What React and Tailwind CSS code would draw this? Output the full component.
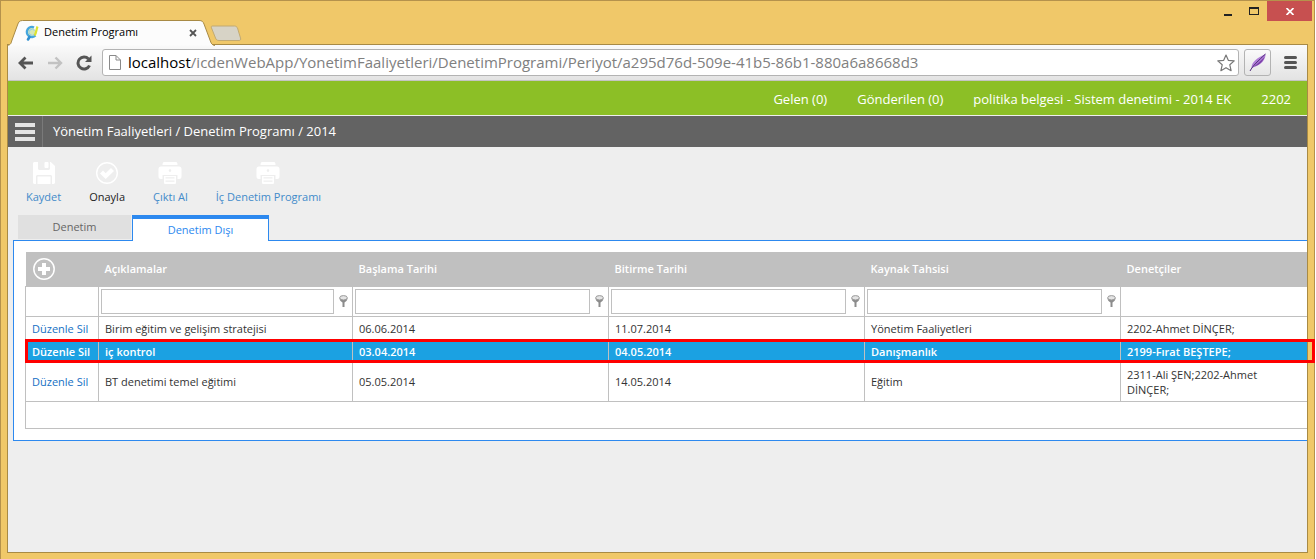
import React, { useState } from 'react';

const initialRows = [
  { id: 1, desc: 'Birim eğitim ve gelişim stratejisi', start: '06.06.2014', end: '11.07.2014', resource: 'Yönetim Faaliyetleri', auditors: '2202-Ahmet DİNÇER;' },
  { id: 2, desc: 'iç kontrol', start: '03.04.2014', end: '04.05.2014', resource: 'Danışmanlık', auditors: '2199-Fırat BEŞTEPE;' },
  { id: 3, desc: 'BT denetimi temel eğitimi', start: '05.05.2014', end: '14.05.2014', resource: 'Eğitim', auditors: '2311-Ali ŞEN;2202-Ahmet DİNÇER;' },
];

const filterColumns = ['Açıklamalar', 'Başlama Tarihi', 'Bitirme Tarihi', 'Kaynak Tahsisi'];

const SaveIcon = () => (
  <svg width="22" height="22" viewBox="0 0 22 22" fill="#fff">
    <path d="M1.5 0H5v6.500C5 7.300 5.700 8 6.500 8h9c.8 0 1.500-.7 1.500-1.500V0h.8L22 4v16.500c0 .8-.7 1.500-1.500 1.500H19v-7.500c0-.8-.7-1.500-1.500-1.500h-13c-.8 0-1.500.7-1.500 1.500V22H1.500C.7 22 0 21.300 0 20.500v-19C0 .7.700 0 1.500 0z" />
    <rect x="11.500" y="0" width="4" height="6" rx="1" />
    <rect x="4.500" y="14.500" width="13" height="7.500" />
  </svg>
);

const ApproveIcon = () => (
  <svg width="22" height="22" viewBox="0 0 22 22" fill="none">
    <circle cx="11" cy="11" r="10.300" stroke="#fff" strokeWidth="1.400" />
    <path d="M4 11.500L7 8.500l2.700 2.700L15 5.900l3 3-8.300 8.200z" fill="#fff" />
  </svg>
);

const PrintIcon = () => (
  <svg width="24" height="22" viewBox="0 0 24 22" fill="#fff">
    <path d="M6 0h12c1 0 1.500 1 1.500 3h-15C4.500 1 5 0 6 0z" />
    <path fillRule="evenodd" d="M3 4.500h18a2.500 2.500 0 0 1 2.500 2.500v7.500a2.500 2.500 0 0 1-2.500 2.500h-1.500v-4h-15v4H3A2.500 2.500 0 0 1 .5 14.500V7A2.500 2.500 0 0 1 3 4.500zM12 7.300a1.300 1.300 0 1 0 0 2.600 1.300 1.300 0 0 0 0-2.600z" />
    <path fillRule="evenodd" d="M6 14h12v6.500c0 1-.5 1.500-1.500 1.500h-9C6.500 22 6 21.500 6 20.500zM7.500 15.200v1.200h9v-1.200zM7.500 18.500v1.200h9v-1.200z" />
  </svg>
);

const FilterIcon = () => (
  <svg width="9" height="12" viewBox="0 0 9 12">
    <path d="M.5 3c0 2.500 1.800 3.800 3 4.500V12h2V7.500C6.700 6.800 8.500 5.500 8.500 3z" fill="#8c8c8c" />
    <ellipse cx="4.500" cy="2.800" rx="3.800" ry="2.200" fill="#e4e4e4" stroke="#999" />
  </svg>
);

const toolbarItems = [
  { label: 'Kaydet', Icon: SaveIcon, color: 'text-[#428bca]' },
  { label: 'Onayla', Icon: ApproveIcon, color: 'text-[#222]' },
  { label: 'Çıktı Al', Icon: PrintIcon, color: 'text-[#428bca]' },
  { label: 'İç Denetim Programı', Icon: PrintIcon, color: 'text-[#428bca]' },
];

const TitleBar = () => (
  <div className="flex h-11 items-start justify-between">
    <div className="relative mt-[19px] flex h-[25px]">
      <svg className="absolute left-0 top-0" width="236" height="26" viewBox="0 0 236 26">
        <path d="M0 25.500C4 25 4 23 5 20L10.500 5C11.500 2 12.500 .5 15.500 .5H192c3 0 4 1 5 3.500l6 16c1 3 2 5.500 5 5.500" fill="#fcfcfc" stroke="#a88a45" />
        <path d="M205 6h22.500c1.500 0 2.500 1 3 2l3 10c.5 1.500 0 2.500-1.500 2.500h-20c-2 0-3-1-3.500-2.500l-4-10c-.5-1.200 0-2 .5-2z" fill="#d7d3c6" stroke="#c2aa72" />
      </svg>
      <div className="relative flex w-[191px] items-center pl-[18px]">
        <svg width="14" height="16" viewBox="0 0 14 16" fill="none">
          <circle cx="6.500" cy="7" r="4.300" fill="#d6e8b4" />
          <path d="M9 2.500A5 5 0 1 0 10.500 10.500" stroke="#45a6de" strokeWidth="2.400" />
          <path d="M9.500 5.500A3 3 0 1 0 9.500 9" stroke="#8fcdf0" strokeWidth="1" />
          <path d="M4.500 12L3 14.500" stroke="#2f8fd0" strokeWidth="2.600" strokeLinecap="round" />
          <path d="M9.500 10.500C11.500 8.500 11 5 12.500 1.500" stroke="#dde32e" strokeWidth="2.200" />
        </svg>
        <span className="ml-[5px] flex-1 text-[11px] text-black">Denetim Programı</span>
        <button aria-label="Sekmeyi kapat" className="p-px">
          <svg width="8" height="8" viewBox="0 0 8 8" stroke="#555" strokeWidth="1.800"><path d="M1 1l6 6M7 1L1 7" /></svg>
        </button>
      </div>
    </div>
    <div className="-mr-1 flex h-5">
      <button aria-label="Küçült" className="flex w-[26px] items-end justify-center pb-[5px]"><span className="h-[2px] w-2 bg-[#222]" /></button>
      <button aria-label="Büyüt" className="flex w-[26px] items-center justify-center"><span className="h-2 w-[10px] border border-t-2 border-[#222]" /></button>
      <button aria-label="Kapat" className="flex w-[45px] items-center justify-center bg-[#c75050]">
        <svg width="8" height="7" viewBox="0 0 8 7" stroke="#fff" strokeWidth="1.700"><path d="M.5 0l7 7M7.500 0l-7 7" /></svg>
      </button>
    </div>
  </div>
);

const AddressBar = () => (
  <div className="flex h-9 items-center border-b border-[#c4c4c4] bg-linear-to-b from-[#fafafa] to-[#e3e3e3] pl-[10px] pr-2">
    <button aria-label="Geri" className="mr-[13px]">
      <svg width="16" height="14" viewBox="0 0 16 14" fill="none" stroke="#555" strokeWidth="2.800"><path d="M15 7H3M7.500 1.500L2 7l5.500 5.500" /></svg>
    </button>
    <button aria-label="İleri" className="mr-[13px]">
      <svg width="16" height="14" viewBox="0 0 16 14" fill="none" stroke="#c2c2c2" strokeWidth="2.400"><path d="M1 7h12M8.500 1.500L14 7l-5.500 5.500" /></svg>
    </button>
    <button aria-label="Yenile" className="mr-[10px]">
      <svg width="16" height="16" viewBox="0 0 16 16" fill="none"><path d="M12.500 4A6 6 0 1 0 13.500 10.500" stroke="#555" strokeWidth="3" /><path d="M15.500 .5V7H9z" fill="#555" /></svg>
    </button>
    <div className="flex h-[27px] flex-1 items-center rounded-[3px] border border-[#b3b3b3] bg-white px-[3px]">
      <svg className="ml-[3px]" width="12" height="15" viewBox="0 0 12 15" fill="#fff" stroke="#8a8a8a"><path d="M.5.5H7L11.500 5v9.500H.5zM7 .5V5h4.500" /></svg>
      <span className="ml-[7px] flex-1 text-[15px] text-[#808080]">
        <span className="text-black">localhost</span>/icdenWebApp/YonetimFaaliyetleri/DenetimProgrami/Periyot/a295d76d-509e-41b5-86b1-880a6a8668d3
      </span>
      <button aria-label="Yer işareti ekle">
        <svg width="18" height="18" viewBox="0 0 18 18" fill="none" stroke="#777" strokeWidth="1.200" strokeLinejoin="round"><path d="M9 1l2.300 5.300 5.900.6-4.400 3.900 1.300 5.900L9 13.700l-5.100 3 1.300-5.900L.8 6.900l5.900-.6z" /></svg>
      </button>
    </div>
    <button aria-label="Eklenti" className="ml-[5px] flex h-[27px] w-[27px] items-center justify-center rounded-[3px] border border-[#b3b3b3] bg-linear-to-b from-[#fafafa] to-[#e6e6e6]">
      <svg width="18" height="19" viewBox="0 0 18 19">
        <path d="M2.500 15C2.500 9 8 5 16.500 1c.3 5.500-4 11-14 14z" fill="#b07fd6" />
        <path d="M5 13.500c5-1 9-5 10.500-9.500C12 8 8 11 5 13.500z" fill="#7a3fa8" />
        <path d="M1 18C4 12.500 9 8 16.500 1" stroke="#4d2a78" fill="none" />
      </svg>
    </button>
    <button aria-label="Menü" className="ml-[13px] mr-[2px] flex w-[13px] flex-col gap-[2px]">
      <span className="h-[3px] rounded-sm bg-[#555]" />
      <span className="h-[3px] rounded-sm bg-[#555]" />
      <span className="h-[3px] rounded-sm bg-[#555]" />
    </button>
  </div>
);

const ProgramTable = ({ selectedId, onSelect }) => (
  <table className="w-full table-fixed border-collapse text-[11px] leading-[15px] text-[#333]">
    <colgroup>
      <col className="w-[73px]" />
      <col className="w-[254px]" />
      <col className="w-64" />
      <col className="w-64" />
      <col className="w-64" />
      <col />
    </colgroup>
    <thead>
      <tr className="h-[34px] bg-[#c0c0c0] text-left text-white">
        <th className="pl-[7px]">
          <button aria-label="Ekle" className="block">
            <svg width="22" height="22" viewBox="0 0 22 22" fill="none" stroke="#fff">
              <circle cx="11" cy="11" r="10.200" strokeWidth="1.500" />
              <path d="M11 5v12M5 11h12" strokeWidth="4" />
            </svg>
          </button>
        </th>
        {filterColumns.map(c => <th key={c} className="pl-[6px] font-semibold">{c}</th>)}
        <th className="pl-[6px] font-semibold">Denetçiler</th>
      </tr>
      <tr className="h-[30px]">
        <td className="border border-[#c0c0c0]" />
        {filterColumns.map(c => (
          <td key={c} className="border border-[#c0c0c0] p-0">
            <div className="flex items-center pl-[2px] pr-1">
              <input aria-label={c} className="h-[25px] min-w-0 flex-1 border border-[#c0c0c0] bg-white px-1 outline-none" />
              <button aria-label={`${c} filtrele`} className="ml-[5px]"><FilterIcon /></button>
            </div>
          </td>
        ))}
        <td className="border-y border-[#c0c0c0]" />
      </tr>
    </thead>
    <tbody>
      {initialRows.map(row => {
        const selected = row.id === selectedId;
        const cell = 'border-x border-[#c0c0c0] px-[6px] py-1';
        return (
          <tr
            key={row.id}
            onClick={() => onSelect(row.id)}
            className={selected ? 'relative bg-[#1ba1e2] font-semibold text-white' : ''}
          >
            <td className={cell}>
              <div className={selected ? 'whitespace-nowrap' : 'whitespace-nowrap text-[#1570c4]'}>
                <a href="#duzenle">Düzenle</a> <a href="#sil">Sil</a>
              </div>
              {selected && <span className="pointer-events-none absolute -top-px bottom-0 -left-px -right-2 border-[3px] border-[#f00]" />}
            </td>
            <td className={cell}>{row.desc}</td>
            <td className={cell}>{row.start}</td>
            <td className={cell}>{row.end}</td>
            <td className={cell}>{row.resource}</td>
            <td className="py-1 pl-[6px] pr-8">{row.auditors}</td>
          </tr>
        );
      })}
    </tbody>
    <tfoot>
      <tr className="h-[27px]"><td colSpan="6" className="border border-r-0 border-[#c0c0c0]" /></tr>
    </tfoot>
  </table>
);

export default function App() {
  const [selectedId, setSelectedId] = useState(2);

  return (
    <div className="min-h-screen bg-white pr-px font-['Open_Sans','Noto_Sans',sans-serif]">
      <div className="flex min-h-screen flex-col border-x border-t border-[#b5924c] bg-[#f0c869] px-[6px] pb-[6px]">
        <TitleBar />
        <div className="-mt-px flex flex-1 flex-col border border-[#a88a45] bg-[#eee]">
          <AddressBar />

          <nav className="flex h-[34px] items-center justify-end gap-[30px] bg-[#8cbf26] pr-4 pt-1 text-[13px] text-white">
            <a href="#gelen">Gelen (0)</a>
            <a href="#gonderilen">Gönderilen (0)</a>
            <a href="#belge">politika belgesi - Sistem denetimi - 2014 EK</a>
            <a href="#2202">2202</a>
          </nav>

          <header className="mt-px flex h-[31px] items-center bg-[#636363] text-[13px] text-white">
            <button aria-label="Gezinti" className="flex h-full w-[35px] flex-col justify-center gap-[3px] border-r border-[#7a7a7a] pl-[7px]">
              <span className="h-1 w-5 bg-[#e4e4e4]" />
              <span className="h-1 w-5 bg-[#e4e4e4]" />
              <span className="h-1 w-5 bg-[#e4e4e4]" />
            </button>
            <span className="pl-[10px]">Yönetim Faaliyetleri / Denetim Programı / 2014</span>
          </header>

          <div className="flex gap-7 px-[18px] pt-[15px]">
            {toolbarItems.map(({ label, Icon, color }) => (
              <button key={label} className={`flex flex-col items-center gap-[3px] text-[11px] leading-5 ${color}`}>
                <Icon />
                {label}
              </button>
            ))}
          </div>

          <div className="mt-2 flex items-start gap-px pl-[10px] text-[11px]">
            <button className="h-6 w-[113px] bg-[#e0e0e0] text-[#666]">Denetim</button>
            <button className="relative -mb-px h-[26px] w-[137px] border-x border-t-4 border-[#2d89ef] bg-white text-[#2d89ef]">Denetim Dışı</button>
          </div>
          <div className="ml-[5px] border border-r-0 border-[#2d89ef] bg-white py-[11px] pl-[11px]">
            <ProgramTable selectedId={selectedId} onSelect={setSelectedId} />
          </div>
        </div>
      </div>
    </div>
  );
}
